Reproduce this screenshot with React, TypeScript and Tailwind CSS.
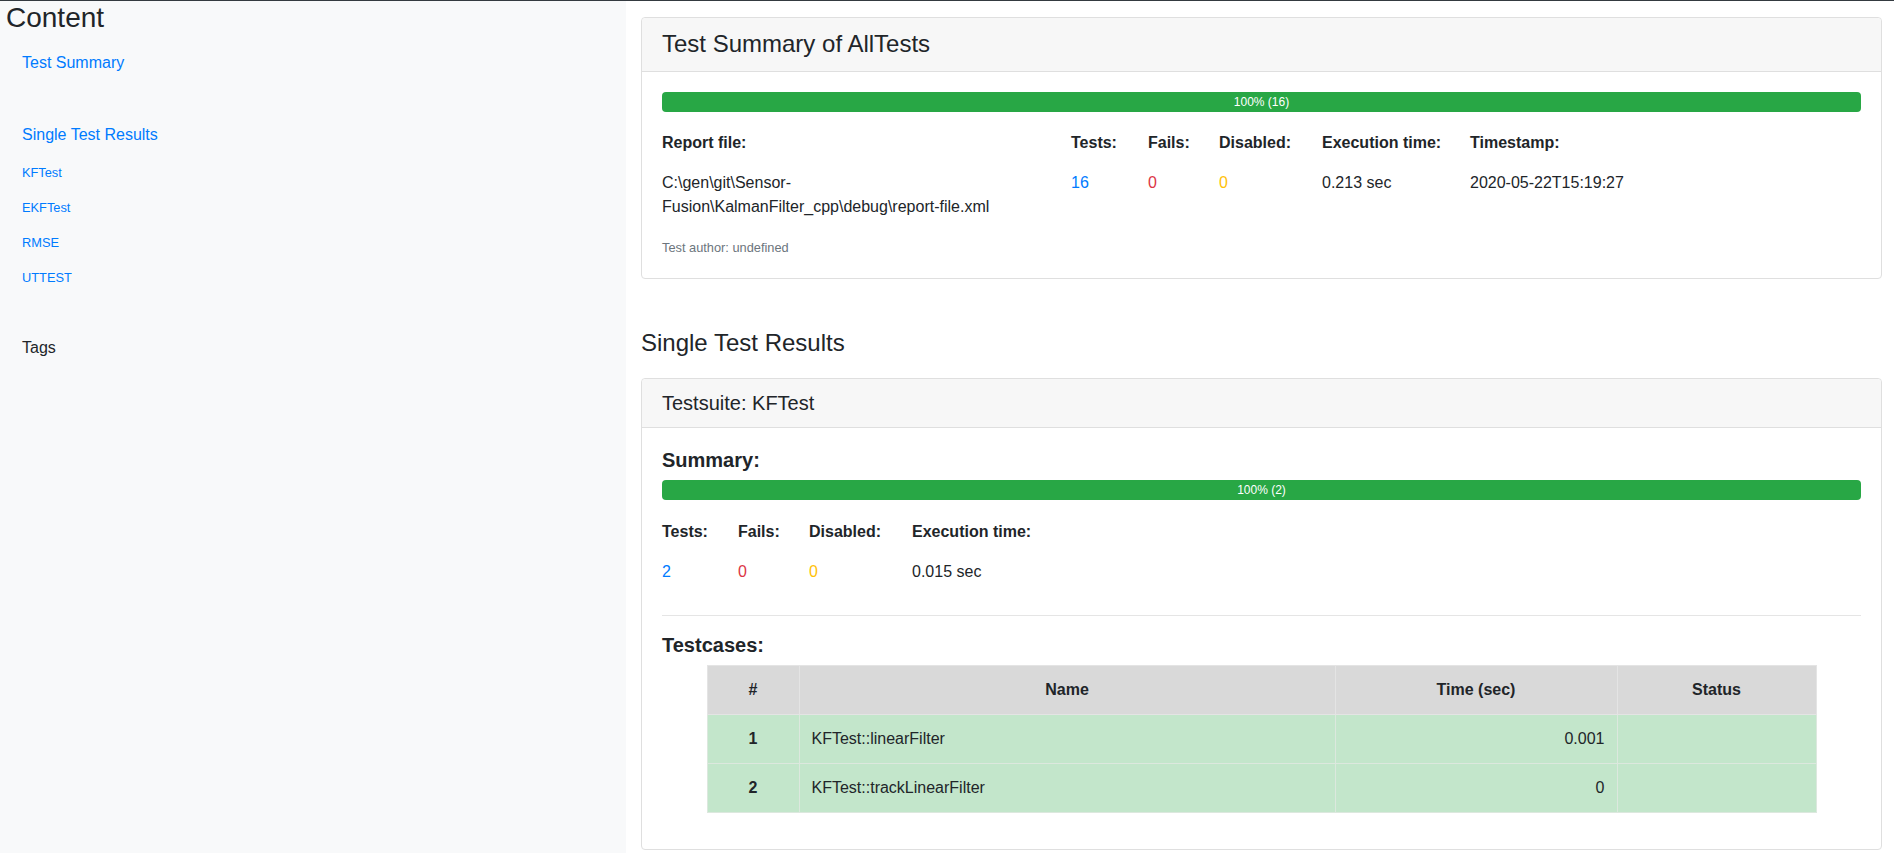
import React from "react"

const font = "font-['Liberation_Sans',Arial,sans-serif]"

const suiteLinks = ["KFTest", "EKFTest", "RMSE", "UTTEST"]

const testcases = [
  { id: 1, name: "KFTest::linearFilter", time: "0.001", status: "" },
  { id: 2, name: "KFTest::trackLinearFilter", time: "0", status: "" },
]

function ProgressBar({ label }: { label: string }) {
  return (
    <div className="h-[20px] rounded-[4px] bg-[#e9ecef] overflow-hidden">
      <div className="h-full w-full bg-[#28a745] text-white text-[12px] leading-[20px] text-center">{label}</div>
    </div>
  )
}

function Sidebar() {
  return (
    <div className="w-[626px] shrink-0 bg-[#f8f9fa]">
      <h3 className="pl-[6px] text-[28px] leading-[33.6px] text-[#212529]">Content</h3>
      <div className="pl-[22px]">
        <a href="#summary" className="block mt-[16px] text-[16px] leading-[24px] text-[#007bff]">
          Test Summary
        </a>
        <a href="#single" className="block mt-[48px] text-[16px] leading-[24px] text-[#007bff]">
          Single Test Results
        </a>
        <div className="mt-[8px]">
          {suiteLinks.map((name) => (
            <div key={name} className="h-[35px] flex items-center">
              <a href={"#" + name} className="text-[12.8px] text-[#007bff]">
                {name}
              </a>
            </div>
          ))}
        </div>
        <div className="mt-[41px] text-[16px] leading-[24px] text-[#212529]">Tags</div>
      </div>
    </div>
  )
}

export default function App() {
  return (
    <div className={`${font} min-h-screen flex border-t border-[#343a40] text-[#212529] bg-white`}>
      <Sidebar />

      {/* Main content */}
      <div className="flex-1 pl-[15px] pr-[12px] pt-[16px]">
        {/* Summary card */}
        <div id="summary" className="border border-[#dfdfdf] rounded-[4px] bg-white">
          <div className="bg-[#f7f7f7] border-b border-[#dfdfdf] px-[20px] py-[12px] rounded-t-[4px]">
            <h4 className="text-[24px] leading-[28.8px]">Test Summary of AllTests</h4>
          </div>
          <div className="p-[20px]">
            <ProgressBar label="100% (16)" />
            <div className="grid grid-cols-[409px_77px_71px_103px_148px_1fr] text-[16px] leading-[24px]">
              <div className="mt-[19px] font-bold">Report file:</div>
              <div className="mt-[19px] font-bold">Tests:</div>
              <div className="mt-[19px] font-bold">Fails:</div>
              <div className="mt-[19px] font-bold">Disabled:</div>
              <div className="mt-[19px] font-bold">Execution time:</div>
              <div className="mt-[19px] font-bold">Timestamp:</div>
              <div className="mt-[16px] pr-[10px]">C:\gen\git\Sensor-Fusion\KalmanFilter_cpp\debug\report-file.xml</div>
              <div className="mt-[16px] text-[#007bff]">16</div>
              <div className="mt-[16px] text-[#dc3545]">0</div>
              <div className="mt-[16px] text-[#ffc107]">0</div>
              <div className="mt-[16px]">0.213 sec</div>
              <div className="mt-[16px]">2020-05-22T15:19:27</div>
            </div>
            <div className="mt-[19px] mb-[1px] text-[12.8px] leading-[19.2px] text-[#6c757d]">Test author: undefined</div>
          </div>
        </div>

        <h4 id="single" className="mt-[50px] text-[24px] leading-[28.8px]">Single Test Results</h4>

        {/* Testsuite card */}
        <div id="KFTest" className="mt-[20px] border border-[#dfdfdf] rounded-[4px] bg-white">
          <div className="bg-[#f7f7f7] border-b border-[#dfdfdf] px-[20px] py-[12px] rounded-t-[4px]">
            <h5 className="text-[20px] leading-[24px]">Testsuite: KFTest</h5>
          </div>
          <div className="p-[20px]">
            <h5 className="text-[20px] leading-[24px] font-bold mb-[8px]">Summary:</h5>
            <ProgressBar label="100% (2)" />
            <div className="grid grid-cols-[76px_71px_103px_1fr] text-[16px] leading-[24px]">
              <div className="mt-[20px] font-bold">Tests:</div>
              <div className="mt-[20px] font-bold">Fails:</div>
              <div className="mt-[20px] font-bold">Disabled:</div>
              <div className="mt-[20px] font-bold">Execution time:</div>
              <div className="mt-[16px] text-[#007bff]">2</div>
              <div className="mt-[16px] text-[#dc3545]">0</div>
              <div className="mt-[16px] text-[#ffc107]">0</div>
              <div className="mt-[16px]">0.015 sec</div>
            </div>
            <hr className="mt-[31px] border-0 border-t border-[#e5e5e5]" />
            <h5 className="mt-[17px] text-[20px] leading-[24px] font-bold mb-[8px]">Testcases:</h5>
            <table className="w-[1109px] mx-auto mb-[16px] border-collapse table-fixed text-[16px] leading-[24px]">
              <thead>
                <tr className="bg-[#d9d9d9]">
                  <th className="w-[92px] border border-[#e4e4e4] p-[12px] text-center font-bold">#</th>
                  <th className="w-[536px] border border-[#e4e4e4] p-[12px] text-center font-bold">Name</th>
                  <th className="w-[282px] border border-[#e4e4e4] p-[12px] text-center font-bold">Time (sec)</th>
                  <th className="w-[199px] border border-[#e4e4e4] p-[12px] text-center font-bold">Status</th>
                </tr>
              </thead>
              <tbody>
                {testcases.map((tc) => (
                  <tr key={tc.id} className="bg-[#c3e6cb]">
                    <td className="border border-[#dce8de] p-[12px] text-center font-bold">{tc.id}</td>
                    <td className="border border-[#dce8de] p-[12px]">{tc.name}</td>
                    <td className="border border-[#dce8de] p-[12px] text-right">{tc.time}</td>
                    <td className="border border-[#dce8de] p-[12px]">{tc.status}</td>
                  </tr>
                ))}
              </tbody>
            </table>
          </div>
        </div>
      </div>
    </div>
  )
}
